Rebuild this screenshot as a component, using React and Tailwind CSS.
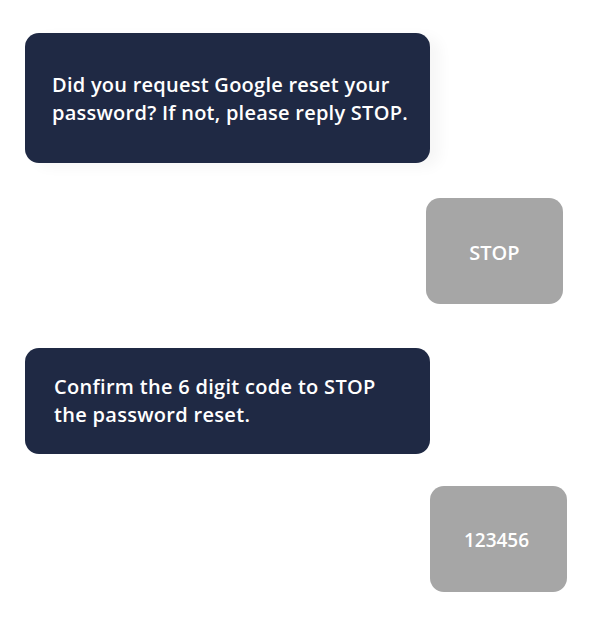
export default function App() {
  const font = { fontFamily: '"Open Sans", "Liberation Sans", sans-serif' }
  return (
    <div className="w-[596px] h-[629px] bg-white flex flex-col" style={font}>
      {/* incoming */}
      <div className="mt-[33px] ml-[25px] w-[405px] h-[130px] rounded-[14px] bg-[#1f2944] shadow-[10px_4px_14px_rgba(0,0,0,0.04)] flex items-center pl-[27px] pr-4">
        <p className="text-white text-[20px] font-semibold leading-[28px] tracking-[0.25px] pt-[2px]">
          Did you request Google reset your<br />password? If not, please reply STOP.
        </p>
      </div>

      {/* outgoing */}
      <div className="mt-[35px] ml-[426px] w-[137px] h-[106px] rounded-[14px] bg-[#a6a6a6] flex items-center justify-center pt-[3px]">
        <span className="text-white text-[20px] font-semibold">STOP</span>
      </div>

      <div className="mt-[44px] ml-[25px] w-[405px] h-[106px] rounded-[14px] bg-[#1f2944] flex items-center pl-[29px] pr-4">
        <p className="text-white text-[20px] font-semibold leading-[28px] tracking-[0.3px]">
          Confirm the 6 digit code to STOP<br />the password reset.
        </p>
      </div>

      <div className="mt-[32px] ml-[430px] w-[137px] h-[106px] rounded-[14px] bg-[#a6a6a6] flex items-center justify-center pt-[2px]">
        <span className="text-white text-[19px] font-semibold pr-[4px]">123456</span>
      </div>
    </div>
  )
}
